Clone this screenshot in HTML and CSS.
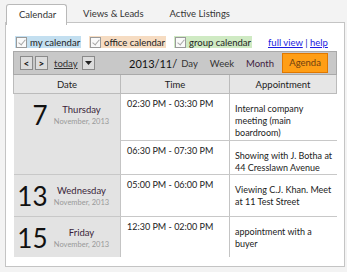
FILE: index.html
```html
<!DOCTYPE html>
<html lang="en">
<head>
    <meta charset="UTF-8">
    <title>Calendar</title>
    <link rel="stylesheet" href="styles.css">
</head>
<body>
    <!-- Tabs -->
    <div class="tabs">
        <div class="tab active">Calendar</div>
        <div class="tab">Views &amp; Leads</div>
        <div class="tab">Active Listings</div>
    </div>

    <div class="panel">
        <!-- Calendar filters -->
        <div class="filters">
            <label class="cal-filter mine"><span class="check"></span>my calendar</label>
            <label class="cal-filter office"><span class="check"></span>office calendar</label>
            <label class="cal-filter group"><span class="check"></span>group calendar</label>
            <span class="links"><a href="#">full view</a> | <a href="#">help</a></span>
        </div>

        <!-- Toolbar -->
        <div class="toolbar">
            <div class="nav">
                <button class="nav-btn">&lt;</button>
                <button class="nav-btn">&gt;</button>
                <a href="#" class="today">today</a>
                <button class="nav-btn drop"><svg width="7" height="4" viewBox="0 0 7 4"><path d="M0 0h7L3.5 4z" fill="#222"/></svg></button>
            </div>
            <div class="title">2013/11/</div>
            <div class="views">
                <span class="view">Day</span>
                <span class="view">Week</span>
                <span class="view month">Month</span>
                <span class="view selected">Agenda</span>
            </div>
        </div>

        <!-- Agenda -->
        <table class="agenda">
            <thead>
                <tr>
                    <th class="col-date">Date</th>
                    <th class="col-time">Time</th>
                    <th>Appointment</th>
                </tr>
            </thead>
            <tbody>
                <tr class="row-a">
                    <td class="date" rowspan="2">
                        <div class="date-box">
                            <span class="day-num">7</span>
                            <span class="day-info"><span class="weekday">Thursday</span><span class="month-year">November, 2013</span></span>
                        </div>
                    </td>
                    <td class="time">02:30 PM - 03:30 PM</td>
                    <td class="appt">Internal company meeting (main boardroom)</td>
                </tr>
                <tr class="row-b">
                    <td class="time">06:30 PM - 07:30 PM</td>
                    <td class="appt">Showing with J. Botha at 44 Cresslawn Avenue</td>
                </tr>
                <tr class="row-c">
                    <td class="date">
                        <div class="date-box">
                            <span class="day-num">13</span>
                            <span class="day-info"><span class="weekday">Wednesday</span><span class="month-year">November, 2013</span></span>
                        </div>
                    </td>
                    <td class="time">05:00 PM - 06:00 PM</td>
                    <td class="appt">Viewing C.J. Khan. Meet at 11 Test Street</td>
                </tr>
                <tr class="row-d">
                    <td class="date">
                        <div class="date-box">
                            <span class="day-num">15</span>
                            <span class="day-info"><span class="weekday">Friday</span><span class="month-year">November, 2013</span></span>
                        </div>
                    </td>
                    <td class="time">12:30 PM - 02:00 PM</td>
                    <td class="appt">appointment with a buyer</td>
                </tr>
            </tbody>
        </table>
    </div>
</body>
</html>
```

FILE: styles.css
```css
body {
    margin: 0;
    background: #f3f3f3;
    font-family: Lato, "Liberation Sans", sans-serif;
    font-size: 10px;
    color: #222;
}

/* Tabs */
.tabs {
    display: flex;
    padding: 4px 0 0 6px;
    height: 19px;
}

.tab {
    padding: 4px 13px 0 13px;
    color: #333;
    font-size: 9.5px;
    white-space: nowrap;
}

.tab.active {
    padding: 4px 12px 0 12px;
    width: 35px;
    text-align: center;
    background: #fff;
    border: 1px solid #b9b9b9;
    border-bottom: none;
    border-radius: 3px 3px 0 0;
    height: 16px;
    position: relative;
    z-index: 1;
    margin-right: 3px;
}

.panel {
    margin: -1px 2px 0 5px;
    height: 230px;
    background: #fff;
    border: 1px solid #c4c4c4;
    box-shadow: 0 1px 0 #d8d8d8;
    padding: 13px 7px 0 7px;
}

/* Filters */
.filters {
    display: flex;
    align-items: center;
    height: 12px;
    padding-left: 2px;
    white-space: nowrap;
}

.cal-filter {
    display: flex;
    align-items: center;
    height: 12px;
    padding-right: 1px;
    margin-right: 8px;
    font-size: 9.5px;
    color: #222;
}

.cal-filter.mine { background: #c3dff0; }
.cal-filter.office { background: #f6dcc2; }
.cal-filter.group { background: #cfeac3; }

.check {
    width: 9px;
    height: 9px;
    border: 1px solid #9a9a9a;
    background: #fafafa;
    margin: 0 3px 0 1px;
    position: relative;
}

.check::after {
    content: "";
    position: absolute;
    left: 3px;
    top: 0;
    width: 3px;
    height: 6px;
    border: solid #a8a8a8;
    border-width: 0 1px 1px 0;
    transform: rotate(40deg);
}

.links {
    margin-left: 8px;
    font-size: 9.5px;
    color: #2020c0;
}

.links a {
    color: #1a1ae0;
}

/* Toolbar */
.toolbar {
    display: flex;
    align-items: center;
    margin-top: 3px;
    height: 22px;
    background: #c8c8c8;
    border: 1px solid #a9a9a9;
    padding: 0 6px;
    white-space: nowrap;
}

.nav {
    display: flex;
    align-items: center;
    width: 109px;
    flex-shrink: 0;
}

.nav-btn {
    width: 13px;
    height: 14px;
    padding: 0;
    margin-right: 2px;
    border: 1px solid #8a8a8a;
    background: #dcdcdc;
    font-family: Lato, sans-serif;
    font-weight: bold;
    font-size: 10px;
    line-height: 11px;
    color: #111;
    display: flex;
    align-items: center;
    justify-content: center;
}

.nav-btn.drop {
    margin-left: 4px;
}

.today {
    margin-left: 4px;
    color: #333;
    font-size: 9.5px;
}

.title {
    font-size: 11px;
    color: #111;
    margin-right: -2px;
}

.views {
    display: flex;
    align-items: center;
}

.view {
    padding: 0 6px;
    font-size: 9.5px;
    color: #333;
}

.view.month {
    color: #402040;
}

.view.selected {
    margin-left: 2px;
    width: 44px;
    padding: 0;
    text-align: center;
    height: 18px;
    line-height: 18px;
    background: #ff9e16;
    border: 1px solid #e07800;
    color: #704010;
}

/* Agenda table */
.agenda {
    width: 100%;
    border-collapse: collapse;
    table-layout: fixed;
}

.agenda th {
    height: 18px;
    padding: 0;
    background: #e6e6e6;
    border: 1px solid #bbb;
    border-top: none;
    font-weight: normal;
    font-size: 9.5px;
    color: #222;
}

.col-date { width: 106px; }
.col-time { width: 108px; }

.agenda td {
    border-bottom: 1px solid #c8c8c8;
    border-right: 1px solid #c4c4c4;
    vertical-align: top;
    padding: 0;
}

.agenda td:last-child {
    border-right: none;
}

.agenda .date {
    background: #e3e3e3;
}

.row-a { height: 47px; }
.row-b { height: 34px; }
.row-c { height: 42px; }
.row-d { height: 40px; }
.row-d td { border-bottom: none; }

.date-box {
    display: flex;
    align-items: center;
    padding-top: 8px;
}

.day-num {
    width: 34px;
    text-align: right;
    font-size: 26px;
    line-height: 26px;
    color: #111;
    margin-right: 6px;
}

.day-info {
    width: 56px;
    display: flex;
    flex-direction: column;
    align-items: center;
}

.weekday {
    font-size: 9.5px;
    color: #3a1f3a;
}

.month-year {
    font-size: 7.5px;
    color: #999;
    margin-top: 2px;
}

.time {
    padding: 4px 0 0 6px !important;
    font-size: 9px;
    line-height: 12px;
    color: #222;
    white-space: nowrap;
}

.appt {
    padding: 9px 0 0 5px !important;
    font-size: 9px;
    line-height: 12px;
    color: #222;
}
```
